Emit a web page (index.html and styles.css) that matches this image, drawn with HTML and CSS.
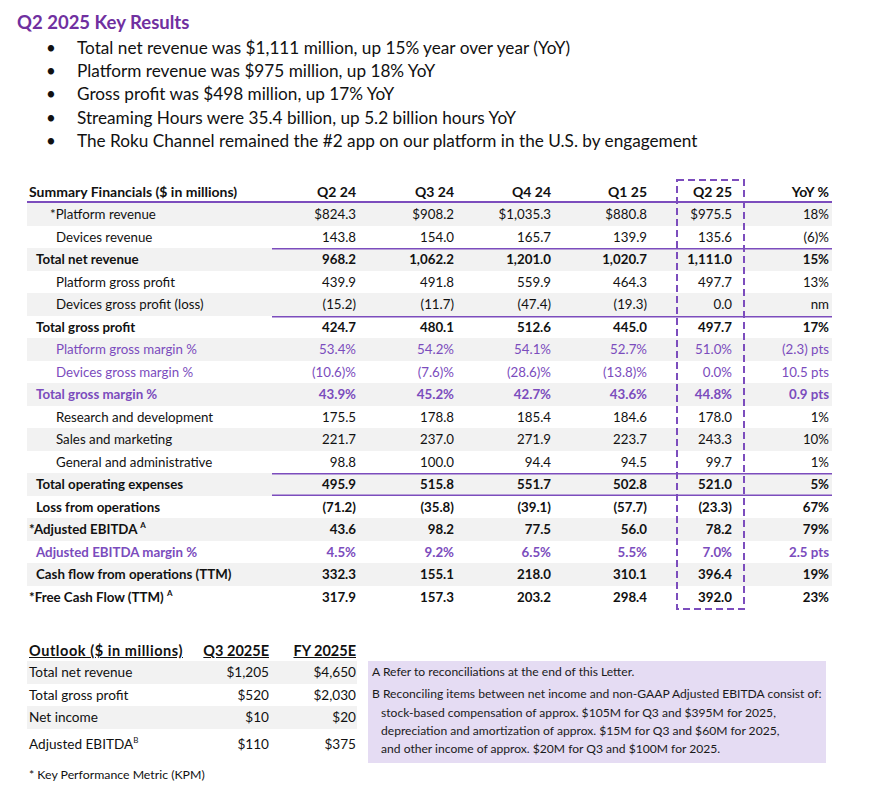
FILE: index.html
```html
<!DOCTYPE html>
<html>
<head>
<meta charset="utf-8">
<link rel="stylesheet" href="styles.css">
</head>
<body>
<h1 class="title">Q2 2025 Key Results</h1>
<ul class="bullets">
  <li><span class="dot">•</span><span>Total net revenue was $1,111 million, up 15% year over year (YoY)</span></li>
  <li><span class="dot">•</span><span>Platform revenue was $975 million, up 18% YoY</span></li>
  <li><span class="dot">•</span><span>Gross profit was $498 million, up 17% YoY</span></li>
  <li><span class="dot">•</span><span>Streaming Hours were 35.4 billion, up 5.2 billion hours YoY</span></li>
  <li><span class="dot">•</span><span>The Roku Channel remained the #2 app on our platform in the U.S. by engagement</span></li>
</ul>

<div class="summary">
  <svg class="qbox" width="69" height="431" viewBox="0 0 69 431">
    <rect x="1" y="1" width="67" height="429" fill="none" stroke="#7c4dbd" stroke-width="2" stroke-dasharray="7 4"></rect>
  </svg>
  <div class="row head">
    <div class="lab">Summary Financials ($ in millions)</div>
    <div class="n c1">Q2 24</div><div class="n c2">Q3 24</div><div class="n c3">Q4 24</div><div class="n c4">Q1 25</div><div class="n c5">Q2 25</div><div class="n c6">YoY %</div>
  </div>
  <div class="row gray">
    <div class="lab ind-star">*Platform revenue</div>
    <div class="n c1">$824.3</div><div class="n c2">$908.2</div><div class="n c3">$1,035.3</div><div class="n c4">$880.8</div><div class="n c5">$975.5</div><div class="n c6">18%</div>
  </div>
  <div class="row">
    <div class="lab ind-sub">Devices revenue</div>
    <div class="n c1">143.8</div><div class="n c2">154.0</div><div class="n c3">165.7</div><div class="n c4">139.9</div><div class="n c5">135.6</div><div class="n c6">(6)%</div>
  </div>
  <div class="row gray bold line-top">
    <div class="lab ind-main">Total net revenue</div>
    <div class="n c1">968.2</div><div class="n c2">1,062.2</div><div class="n c3">1,201.0</div><div class="n c4">1,020.7</div><div class="n c5">1,111.0</div><div class="n c6">15%</div>
  </div>
  <div class="row">
    <div class="lab ind-sub">Platform gross profit</div>
    <div class="n c1">439.9</div><div class="n c2">491.8</div><div class="n c3">559.9</div><div class="n c4">464.3</div><div class="n c5">497.7</div><div class="n c6">13%</div>
  </div>
  <div class="row gray">
    <div class="lab ind-sub">Devices gross profit (loss)</div>
    <div class="n c1">(15.2)</div><div class="n c2">(11.7)</div><div class="n c3">(47.4)</div><div class="n c4">(19.3)</div><div class="n c5">0.0</div><div class="n c6">nm</div>
  </div>
  <div class="row bold line-top">
    <div class="lab ind-main">Total gross profit</div>
    <div class="n c1">424.7</div><div class="n c2">480.1</div><div class="n c3">512.6</div><div class="n c4">445.0</div><div class="n c5">497.7</div><div class="n c6">17%</div>
  </div>
  <div class="row gray purple">
    <div class="lab ind-sub">Platform gross margin %</div>
    <div class="n c1">53.4%</div><div class="n c2">54.2%</div><div class="n c3">54.1%</div><div class="n c4">52.7%</div><div class="n c5">51.0%</div><div class="n c6">(2.3) pts</div>
  </div>
  <div class="row purple">
    <div class="lab ind-sub">Devices gross margin %</div>
    <div class="n c1">(10.6)%</div><div class="n c2">(7.6)%</div><div class="n c3">(28.6)%</div><div class="n c4">(13.8)%</div><div class="n c5">0.0%</div><div class="n c6">10.5 pts</div>
  </div>
  <div class="row gray purple bold">
    <div class="lab ind-main">Total gross margin %</div>
    <div class="n c1">43.9%</div><div class="n c2">45.2%</div><div class="n c3">42.7%</div><div class="n c4">43.6%</div><div class="n c5">44.8%</div><div class="n c6">0.9 pts</div>
  </div>
  <div class="row">
    <div class="lab ind-sub">Research and development</div>
    <div class="n c1">175.5</div><div class="n c2">178.8</div><div class="n c3">185.4</div><div class="n c4">184.6</div><div class="n c5">178.0</div><div class="n c6">1%</div>
  </div>
  <div class="row gray">
    <div class="lab ind-sub">Sales and marketing</div>
    <div class="n c1">221.7</div><div class="n c2">237.0</div><div class="n c3">271.9</div><div class="n c4">223.7</div><div class="n c5">243.3</div><div class="n c6">10%</div>
  </div>
  <div class="row">
    <div class="lab ind-sub">General and administrative</div>
    <div class="n c1">98.8</div><div class="n c2">100.0</div><div class="n c3">94.4</div><div class="n c4">94.5</div><div class="n c5">99.7</div><div class="n c6">1%</div>
  </div>
  <div class="row gray bold line-top line-bottom">
    <div class="lab ind-main">Total operating expenses</div>
    <div class="n c1">495.9</div><div class="n c2">515.8</div><div class="n c3">551.7</div><div class="n c4">502.8</div><div class="n c5">521.0</div><div class="n c6">5%</div>
  </div>
  <div class="row bold">
    <div class="lab ind-main">Loss from operations</div>
    <div class="n c1">(71.2)</div><div class="n c2">(35.8)</div><div class="n c3">(39.1)</div><div class="n c4">(57.7)</div><div class="n c5">(23.3)</div><div class="n c6">67%</div>
  </div>
  <div class="row gray bold">
    <div class="lab ind-ast">*Adjusted EBITDA <sup>A</sup></div>
    <div class="n c1">43.6</div><div class="n c2">98.2</div><div class="n c3">77.5</div><div class="n c4">56.0</div><div class="n c5">78.2</div><div class="n c6">79%</div>
  </div>
  <div class="row purple bold">
    <div class="lab ind-main">Adjusted EBITDA margin %</div>
    <div class="n c1">4.5%</div><div class="n c2">9.2%</div><div class="n c3">6.5%</div><div class="n c4">5.5%</div><div class="n c5">7.0%</div><div class="n c6">2.5 pts</div>
  </div>
  <div class="row gray bold">
    <div class="lab ind-main">Cash flow from operations (TTM)</div>
    <div class="n c1">332.3</div><div class="n c2">155.1</div><div class="n c3">218.0</div><div class="n c4">310.1</div><div class="n c5">396.4</div><div class="n c6">19%</div>
  </div>
  <div class="row bold">
    <div class="lab ind-ast">*Free Cash Flow (TTM) <sup>A</sup></div>
    <div class="n c1">317.9</div><div class="n c2">157.3</div><div class="n c3">203.2</div><div class="n c4">298.4</div><div class="n c5">392.0</div><div class="n c6">23%</div>
  </div>
</div>

<div class="outlook-wrap">
  <div class="outlook">
    <div class="orow ohead">
      <div class="olab"><u class="otitle">Outlook ($ in millions)</u></div>
      <div class="on oc1"><u>Q3 2025E</u></div>
      <div class="on oc2"><u>FY 2025E</u></div>
    </div>
    <div class="orow gray">
      <div class="olab">Total net revenue</div><div class="on oc1">$1,205</div><div class="on oc2">$4,650</div>
    </div>
    <div class="orow">
      <div class="olab">Total gross profit</div><div class="on oc1">$520</div><div class="on oc2">$2,030</div>
    </div>
    <div class="orow gray">
      <div class="olab">Net income</div><div class="on oc1">$10</div><div class="on oc2">$20</div>
    </div>
    <div class="orow last">
      <div class="olab">Adjusted EBITDA<sup>B</sup></div><div class="on oc1">$110</div><div class="on oc2">$375</div>
    </div>
  </div>
  <div class="notes">
    <p class="note-a">A Refer to reconciliations at the end of this Letter.</p>
    <p class="note-b">B Reconciling items between net income and non-GAAP Adjusted EBITDA consist of:</p>
    <p class="note-cont">stock-based compensation of approx. $105M for Q3 and $395M for 2025,<br>depreciation and amortization of approx. $15M for Q3 and $60M for 2025,<br>and other income of approx. $20M for Q3 and $100M for 2025.</p>
  </div>
</div>
<p class="kpm">* Key Performance Metric (KPM)</p>
</body>
</html>
```

FILE: styles.css
```css
* { box-sizing: border-box; }
body {
  margin: 0;
  background: #fff;
  font-family: Lato, "Open Sans", "Liberation Sans", sans-serif;
  color: #111;
  width: 869px;
}
.title {
  margin: 0;
  padding: 10px 0 0 17px;
  font-size: 18.5px;
  line-height: 24px;
  font-weight: 700;
  color: #7030a0;
}
.bullets {
  list-style: none;
  margin: 2px 0 0 0;
  padding: 0 0 0 46px;
}
.bullets li {
  display: flex;
  font-size: 17.2px;
  line-height: 23.2px;
}
.dot {
  width: 31px;
  font-size: 17px;
}
.summary {
  position: relative;
  margin: 31px 0 0 27px;
  width: 805px;
  font-size: 13.3px;
}
.qbox {
  position: absolute;
  left: 649px;
  top: -4px;
  pointer-events: none;
}
.row {
  display: grid;
  grid-template-columns: 245px 87px 98px 97px 123px 67px 88px;
  height: 22.5px;
  align-items: center;
  line-height: 16px;
}
.row.head {
  height: 20px;
  font-weight: 700;
  font-size: 14px;
  border-bottom: 2px solid #7c4dbd;
  align-items: end;
  padding-bottom: 1px;
}
.row.head .lab { padding-left: 2px; }
.gray { background: #f2f2f2; }
.bold { font-weight: 700; }
.purple { color: #7b4cbd; }
.n { text-align: right; padding-right: 3px; }
.c4 { padding-right: 30px; }
.c5 { padding-right: 12px; }
.lab { white-space: nowrap; }
.ind-star { padding-left: 23px; }
.ind-sub { padding-left: 29px; }
.ind-main { padding-left: 9px; }
.ind-ast { padding-left: 2px; }
.line-top .n { box-shadow: inset 0 1.5px 0 #7c4dbd; align-self: stretch; display: flex; align-items: center; justify-content: flex-end; }
.line-bottom .n { box-shadow: inset 0 1.5px 0 #7c4dbd, inset 0 -1.5px 0 #7c4dbd; }
sup {
  font-size: 8px;
  line-height: 0;
  vertical-align: 6px;
}
.outlook-wrap {
  display: flex;
  align-items: flex-start;
  margin: 32px 0 0 27px;
}
.outlook {
  width: 330px;
  font-size: 13.6px;
}
.orow {
  display: grid;
  grid-template-columns: 173px 72px 85px;
  height: 22.5px;
  align-items: center;
}
.orow.ohead {
  height: 21px;
  font-weight: 700;
  font-size: 14.5px;
  align-items: center;
}
.otitle { letter-spacing: 0.55px; }
.orow.last { height: 27px; align-items: end; padding-bottom: 4px; }
.olab { padding-left: 2px; white-space: nowrap; }
.on { text-align: right; }
.oc1 { padding-right: 3px; }
.oc2 { padding-right: 1px; }
.notes {
  margin: 21px 0 0 11px;
  width: 458px;
  height: 102px;
  background: #e5dcf3;
  font-size: 12.1px;
  color: #1a1a1a;
  padding: 1px 0 0 4px;
}
.notes p { margin: 0; white-space: nowrap; }
.note-a { line-height: 20px; }
.note-b { line-height: 21px; margin-top: 1px !important; }
.note-cont { padding-left: 9px; line-height: 18px; }
.kpm {
  margin: 4px 0 0 29px;
  font-size: 12.3px;
  line-height: 16px;
}
```
